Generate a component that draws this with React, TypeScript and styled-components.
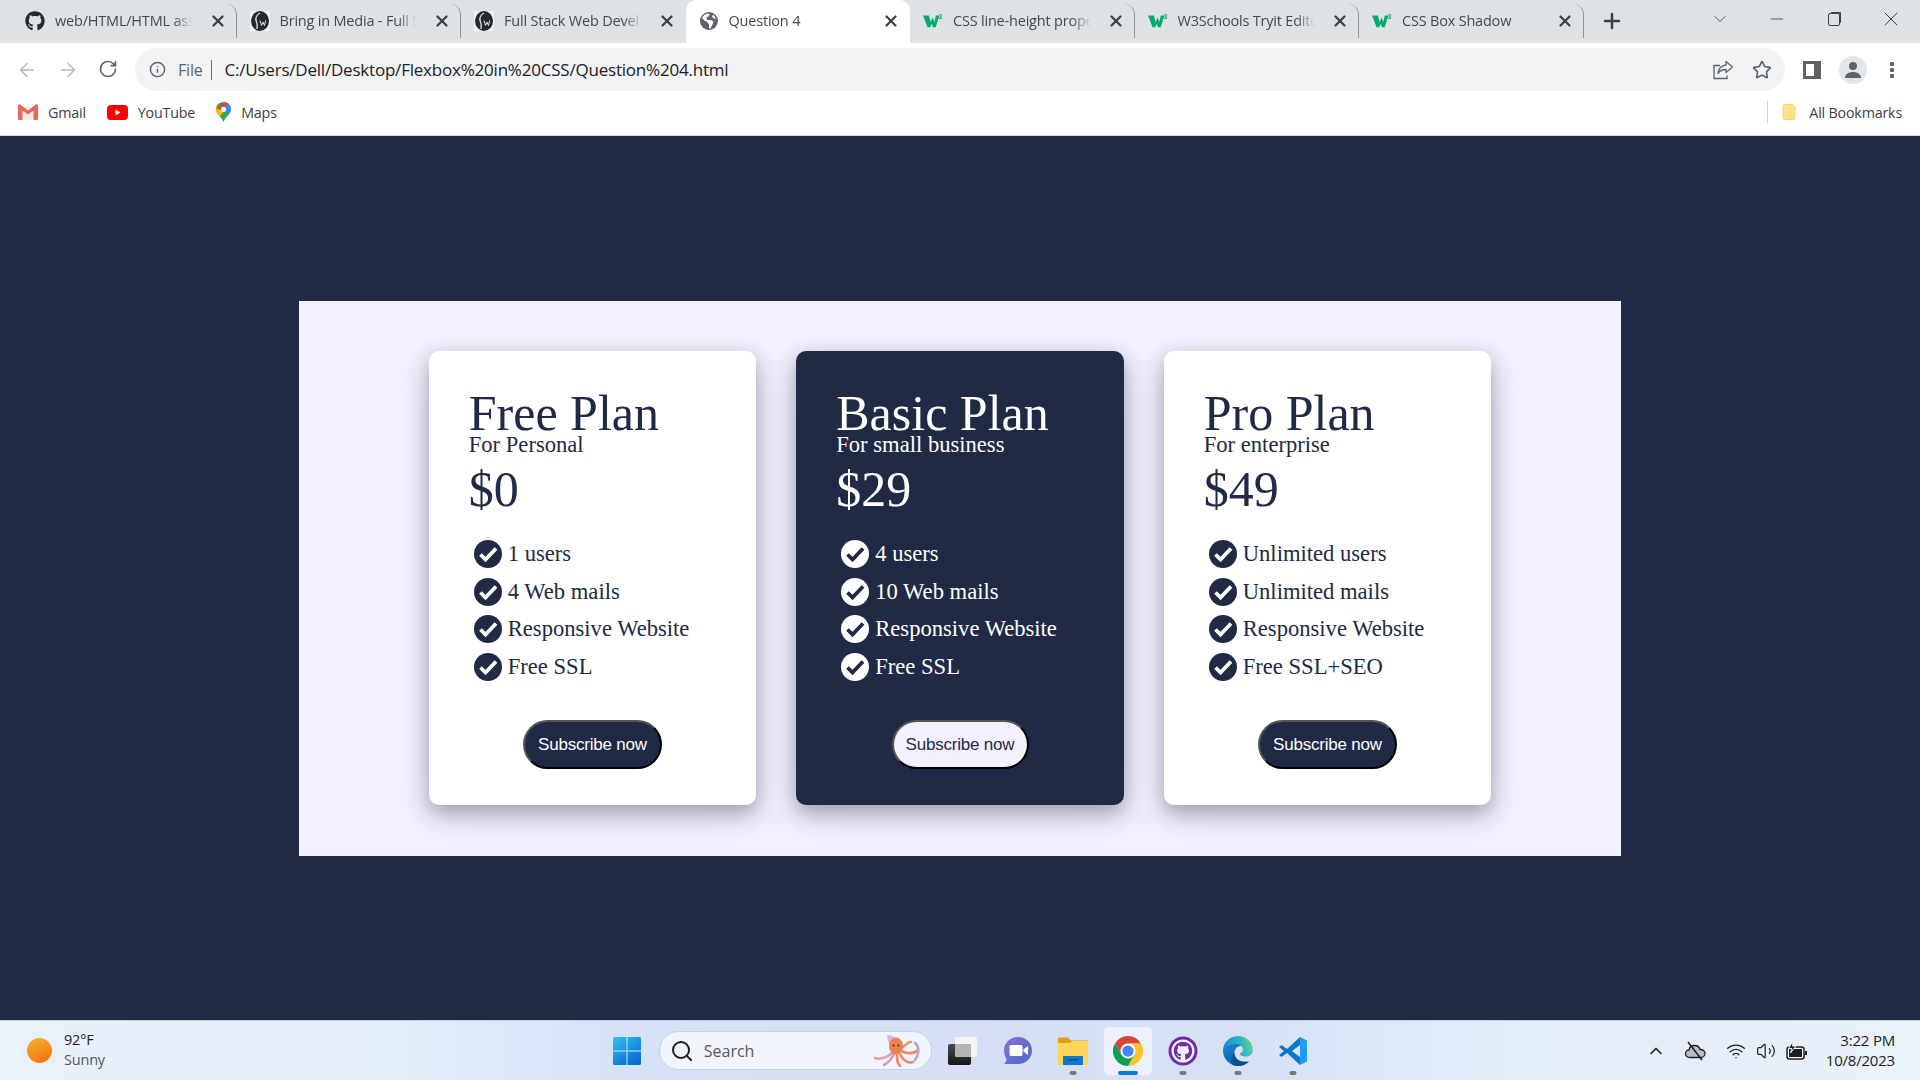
import React from "react";
import styled, { createGlobalStyle } from "styled-components";
import { FaGithub } from "react-icons/fa";
import {
  ArrowLeft,
  ArrowRight,
  RotateCw,
  Info,
  Star,
  Plus,
  X,
  ChevronDown,
  Minus,
  Search,
  ChevronUp,
  Wifi,
  Volume2,
} from "lucide-react";

const navy = "#212a45";
const lilac = "#f3f1fd";

const GlobalStyle = createGlobalStyle`
  html, body {
    margin: 0;
    padding: 0;
    height: 100%;
    overflow: hidden;
  }
  * { box-sizing: border-box; }
`;

const Screen = styled.div`
  width: 1920px;
  height: 1080px;
  display: flex;
  flex-direction: column;
  background: ${navy};
  font-family: "Open Sans", "Noto Sans", sans-serif;
`;

/* browser chrome */
const TabStrip = styled.div`
  height: 43px;
  background: #dee1e6;
  display: flex;
  align-items: flex-start;
  padding-left: 12px;
  flex: none;
`;

const TabBox = styled.div<{ $active?: boolean; $sep?: boolean }>`
  width: 224.5px;
  height: ${(p) => (p.$active ? "43px" : "34px")};
  margin-top: ${(p) => (p.$active ? "0" : "4px")};
  padding-bottom: ${(p) => (p.$active ? "1px" : "0")};
  background: ${(p) => (p.$active ? "#fff" : "transparent")};
  border-radius: 10px 10px 0 0;
  border-right: ${(p) => (p.$sep ? "1px solid #8d9094" : "1px solid transparent")};
  display: flex;
  align-items: center;
  padding-left: 13px;
  padding-right: 9px;
  gap: 10px;
  flex: none;
`;

const TabIcon = styled.span`
  width: 20px;
  height: 20px;
  display: flex;
  align-items: center;
  justify-content: center;
  flex: none;
`;

const TabTitle = styled.span`
  flex: 1;
  min-width: 0;
  margin-right: 6px;
  margin-bottom: 2px;
  font-size: 14.5px;
  letter-spacing: -0.2px;
  color: #45484d;
  white-space: nowrap;
  -webkit-mask-image: linear-gradient(to right, #000 86%, transparent 100%);
  mask-image: linear-gradient(to right, #000 86%, transparent 100%);
`;

const TabClose = styled(X)`
  flex: none;
  color: #3c3f43;
`;

const NewTab = styled(Plus)`
  margin: 9px 0 0 16px;
  color: #3c4043;
  flex: none;
`;

const WindowButtons = styled.div`
  margin-left: auto;
  margin-right: 1px;
  display: flex;
  align-items: center;
  height: 38px;
  color: #3c4043;
`;

const WindowSlot = styled.span`
  width: 57px;
  display: flex;
  justify-content: center;
`;

const RestoreIcon = styled.span`
  width: 12px;
  height: 13px;
  border: 1.2px solid #3c4043;
  border-radius: 2px;
  box-shadow: 2px -2px 0 -1px #3c4043;
`;

const Toolbar = styled.div`
  height: 48px;
  background: #fff;
  display: flex;
  align-items: center;
  padding: 5px 0 0 16px;
  flex: none;
`;

const NavButtons = styled.div`
  display: flex;
  gap: 19px;
  width: 119px;
  flex: none;
`;

const AddressBar = styled.div`
  width: 1650px;
  height: 43px;
  border-radius: 22px;
  background: #f1f3f4;
  display: flex;
  align-items: center;
  padding: 0 13px 0 14px;
  font-size: 17px;
  letter-spacing: -0.21px;
  flex: none;
`;

const FileLabel = styled.span`
  color: #5f6368;
  margin-left: 12px;
  padding-right: 9px;
  border-right: 1px solid #6c6f73;
  line-height: 20px;
  font-size: 16px;
`;

const Url = styled.span`
  color: #202124;
  margin-left: 12px;
  flex: 1;
`;

const BarRight = styled.div`
  display: flex;
  gap: 18px;
  align-items: center;
  color: #5f6368;
`;

const ToolbarRight = styled.div`
  margin-left: 18px;
  display: flex;
  align-items: center;
  gap: 18px;
  color: #5f6368;
`;

const PanelIcon = styled.span`
  width: 18px;
  height: 18px;
  border: 3px solid #5f6368;
  border-right-width: 7px;
  display: block;
`;

const Avatar = styled.span`
  width: 28px;
  height: 28px;
  border-radius: 50%;
  background: #e2e5ea;
  display: flex;
  align-items: center;
  justify-content: center;
`;

const Dots = styled.span`
  width: 4px;
  height: 16px;
  margin-left: 5px;
  background: radial-gradient(circle at 2px 2px, #5f6368 2px, transparent 2.4px) 0 0 / 4px 6px;
`;

const Bookmarks = styled.div`
  height: 45px;
  background: #fff;
  border-bottom: 1px solid #d3d5d9;
  display: flex;
  align-items: center;
  padding: 0 18px 2px;
  font-size: 14.3px;
  letter-spacing: -0.2px;
  color: #3c4043;
  flex: none;
`;

const Bookmark = styled.div`
  display: flex;
  align-items: center;
  gap: 10px;
  margin-right: 21px;
`;

const AllBookmarks = styled.div`
  margin-left: auto;
  display: flex;
  align-items: center;
  gap: 13px;
  padding-left: 14px;
  border-left: 1px solid #d5d6d8;
  height: 22px;
`;

/* page content */
const Page = styled.main`
  flex: 1;
  background: ${navy};
  display: flex;
  justify-content: center;
  padding-top: 165px;
`;

const Panel = styled.section`
  width: 1322px;
  height: 555px;
  padding-top: 50px;
  background: ${lilac};
  display: flex;
  justify-content: center;
  align-items: flex-start;
  gap: 40px;
`;

const Card = styled.article<{ $dark?: boolean }>`
  width: 327.5px;
  height: 454px;
  padding: 40px 40px 0;
  border-radius: 10px;
  background: ${(p) => (p.$dark ? navy : "#fff")};
  color: ${(p) => (p.$dark ? "#fff" : navy)};
  box-shadow: 0 8px 20px rgba(33, 42, 69, 0.35), 0 12px 40px rgba(33, 42, 69, 0.12);
  font-family: "Liberation Serif", "Times New Roman", serif;
  display: flex;
  flex-direction: column;
`;

const PlanName = styled.h2`
  margin: 0;
  font-size: 50px;
  line-height: 44px;
  font-weight: 400;
`;

const Audience = styled.div`
  font-size: 22.6px;
  line-height: 20px;
`;

const Price = styled.div`
  font-size: 50px;
  line-height: 55px;
  margin-top: 7px;
`;

const Features = styled.ul`
  list-style: none;
  margin: 23px 0 0;
  padding: 0 0 0 5px;
  display: flex;
  flex-direction: column;
  gap: 9.7px;
`;

const Feature = styled.li`
  height: 28px;
  display: flex;
  align-items: center;
  gap: 6px;
  font-size: 22.6px;
  white-space: nowrap;
`;

const Subscribe = styled.button<{ $dark?: boolean }>`
  align-self: center;
  width: ${(p) => (p.$dark ? "137px" : "139px")};
  height: 49px;
  margin-top: 39px;
  border-radius: 25px;
  border: 2px outset #111;
  border-color: #555 #000 #000 #555;
  background: ${(p) => (p.$dark ? lilac : navy)};
  color: ${(p) => (p.$dark ? navy : "#fff")};
  font-family: "Liberation Sans", Arial, sans-serif;
  font-size: 17px;
  letter-spacing: -0.2px;
  padding: 0;
`;

/* taskbar */
const Taskbar = styled.footer`
  height: 60px;
  flex: none;
  border-top: 1px solid #c5ccda;
  background: linear-gradient(90deg, #e9f1f9 0%, #e4eef9 20%, #d5e2f8 32%, #d5def5 50%, #d7e1f6 65%, #e4eef9 80%, #e9f1f9 100%);
  display: grid;
  grid-template-columns: 1fr auto 1fr;
  align-items: center;
`;

const Weather = styled.div`
  display: flex;
  align-items: center;
  gap: 12px;
  padding-left: 27px;
`;

const Sun = styled.span`
  width: 25px;
  height: 25px;
  border-radius: 50%;
  background: linear-gradient(160deg, #f2b32a, #f56f10);
`;

const WeatherText = styled.div`
  font-size: 14.5px;
  line-height: 20px;
  letter-spacing: -0.2px;
  color: #1d1f24;
  padding-bottom: 2px;
`;

const Muted = styled.div`
  color: #55585f;
`;

const Center = styled.div`
  display: flex;
  align-items: center;
  margin-left: 12px;
`;

const SearchBox = styled.div`
  width: 273px;
  height: 39px;
  margin-left: 17px;
  margin-right: 3.5px;
  border-radius: 20px;
  background: #f1f5fd;
  border: 1px solid #c7cfe3;
  display: flex;
  align-items: center;
  padding: 0 10px 0 10px;
  gap: 10px;
  font-size: 16px;
  color: #55585f;
`;

const SearchText = styled.span`
  flex: 1;
`;

const AppSlot = styled.div<{ $active?: boolean }>`
  width: 48px;
  height: 48px;
  margin: 0 3.5px;
  border-radius: 5px;
  background: ${(p) => (p.$active ? "rgba(255,255,255,.55)" : "transparent")};
  display: flex;
  align-items: center;
  justify-content: center;
  position: relative;
`;

const RunDot = styled.span<{ $active?: boolean }>`
  position: absolute;
  bottom: 0;
  left: 50%;
  transform: translateX(-50%);
  width: ${(p) => (p.$active ? "20px" : "7px")};
  height: 4px;
  border-radius: 2px;
  background: ${(p) => (p.$active ? "#0b78d8" : "#75777c")};
`;

const Tray = styled.div`
  justify-self: end;
  display: flex;
  align-items: center;
  color: #1d1f24;
  padding-right: 25px;
`;

const TrayIcons = styled.div`
  display: flex;
  align-items: center;
  gap: 10px;
  margin-right: 18px;
`;

const TraySlot = styled.span<{ $extra?: number }>`
  display: flex;
  margin-right: ${(p) => p.$extra ?? 0}px;
`;

const Clock = styled.div`
  text-align: right;
  font-size: 15px;
  line-height: 20px;
  letter-spacing: -0.2px;
  color: #1d1f24;
  padding-bottom: 2px;
`;

const W3Logo = () => (
  <svg width="22" height="16" viewBox="0 0 22 16">
    <path fill="#04aa6d" d="M0 2h6.500l2 7 2-5 2 5 1.600-7H18l-4 13h-3L9.500 11 8 15H5z" />
    <text x="17" y="6" fontSize="7" fontFamily="Liberation Sans, sans-serif" fontWeight="700" fill="#04aa6d">3</text>
  </svg>
);

const WpIcon = () => (
  <svg width="20" height="20" viewBox="0 0 20 20">
    <rect width="20" height="20" fill="#f1f1f1" />
    <ellipse cx="10" cy="10" rx="9" ry="10" fill="#23292e" />
    <path d="M10 2C6 4 5 8 6.500 11c1 2 1 4 .5 7" fill="none" stroke="#e8e8e8" strokeWidth="1.300" />
    <path d="M10 9.500l1.500 5 1.500-3.500 1.500 3.500 1.200-5" fill="none" stroke="#e8e8e8" strokeWidth="1" />
  </svg>
);

const Globe = () => (
  <svg width="18" height="18" viewBox="0 0 18 18">
    <circle cx="9" cy="9" r="9" fill="#5f6368" />
    <path fill="#fff" d="M7.500 1.500C5 2 3 4 2 6l3 3 2 .5 1 2 1 .5v4l1.500.5 2-4 1-3-3-1.500H7L6.500 5.500 9 4l.5-2zM13 2.500l-1 2.500 3.500 2.500c0-2-1-4-2.500-5z" />
  </svg>
);

const ShareIcon = () => (
  <svg width="22" height="20" viewBox="0 0 22 20" fill="none" stroke="#5f6368" strokeWidth="1.300">
    <path d="M8 5.500H2v13h13v-3" />
    <path d="M14 1.500l6.500 5.500-6.500 5.500V9.500c-3.500 0-6 1-8 4 .5-4.500 3.500-8 8-8.500z" strokeLinejoin="round" />
  </svg>
);

const GmailIcon = () => (
  <svg width="20" height="16" viewBox="0 0 20 16">
    <path fill="#eeeeee" d="M3 3h14v13H3z" />
    <path fill="#e8685c" d="M0 1.500 1.500 0 10 6.500 18.500 0 20 1.500V14.500A1.500 1.500 0 0 1 18.500 16H15.500V6.500L10 10.500 4.500 6.500V16H1.500A1.500 1.500 0 0 1 0 14.500z" />
  </svg>
);

const YoutubeIcon = () => (
  <svg width="21" height="15" viewBox="0 0 21 15">
    <rect width="21" height="15" rx="4" fill="#f00" />
    <path fill="#fff" d="M8.500 4.500v6l5-3z" />
  </svg>
);

const MapsIcon = () => (
  <svg width="15" height="20" viewBox="0 0 15 20">
    <defs>
      <clipPath id="pin">
        <path d="M7.500 0C3.400 0 0 3.200 0 7.300 0 12 5 14.500 7.500 20 10 14.500 15 12 15 7.300 15 3.200 11.600 0 7.500 0z" />
      </clipPath>
    </defs>
    <g clipPath="url(#pin)">
      <rect width="15" height="20" fill="#34a853" />
      <path fill="#fbbc04" d="M0 5h5l2 6-5 5H0z" />
      <path fill="#4285f4" d="M9 0h6v11l-7-1z" />
      <path fill="#ea4335" d="M0 6 9 0l3 2-8 6z" />
    </g>
    <circle cx="7.500" cy="7.300" r="2.600" fill="#fff" />
  </svg>
);

const FolderIcon = () => (
  <svg width="14" height="16" viewBox="0 0 14 16">
    <path fill="#fde38a" stroke="#f6d45f" d="M1 2a1.500 1.500 0 0 1 1.500-1.500h8L13 3v11a1.500 1.500 0 0 1-1.500 1.500h-9A1.500 1.500 0 0 1 1 14z" />
  </svg>
);

const CheckBadge = ({ dark }: { dark?: boolean }) => (
  <svg width="28" height="28" viewBox="0 0 28 28">
    <circle cx="14" cy="14" r="14" fill={dark ? "#fff" : navy} />
    <path d="M6.500 14.500 11.500 19.500 22 8.500" fill="none" stroke={dark ? navy : "#fff"} strokeWidth="3.800" />
  </svg>
);

const WindowsIcon = () => (
  <svg width="30" height="30" viewBox="0 0 30 30">
    <defs>
      <linearGradient id="win" x1="0" y1="0" x2="0.6" y2="1">
        <stop offset="0" stopColor="#35c1f7" />
        <stop offset="1" stopColor="#0570d0" />
      </linearGradient>
    </defs>
    <path fill="url(#win)" d="M1 2.500A1.500 1.500 0 0 1 2.500 1h12v13.500H1zM15.500 1h12A1.500 1.500 0 0 1 29 2.500v12H15.500zM1 15.500h13.500V29h-12A1.500 1.500 0 0 1 1 27.500zM15.500 15.500H29v12a1.500 1.500 0 0 1-1.500 1.500h-12z" />
  </svg>
);

const Octopus = () => (
  <svg width="48" height="32" viewBox="0 0 48 32">
    <path fill="#d9b8e0" d="M14 0c6 0 11 3 12 8l-7 5c-3-3-5-8-5-13z" />
    <g fill="none" strokeWidth="2.600" strokeLinecap="round">
      <path d="M20 17C15 22 8 25 2 23" stroke="#e9a0a0" />
      <path d="M21 19C18 25 15 28 11 30" stroke="#d99ac0" />
      <path d="M24 20C24 25 24 28 27 31" stroke="#ef8a6a" />
      <path d="M27 19C30 25 34 29 40 27" stroke="#ef8a6a" />
      <path d="M28 16C34 19 41 19 45 15" stroke="#ef8a6a" />
      <path d="M28 13C33 12 34 6 38 7" stroke="#f09a70" />
      <path d="M42 8C47 12 46 20 42 25" stroke="#b5a4d8" />
    </g>
    <ellipse cx="23" cy="11" rx="7" ry="8.500" fill="#f0804f" />
    <circle cx="20.500" cy="10.500" r="1" fill="#333" />
    <circle cx="25.500" cy="10.500" r="1" fill="#333" />
  </svg>
);

const TaskViewIcon = () => (
  <svg width="30" height="28" viewBox="0 0 30 28">
    <defs>
      <linearGradient id="tv" x1="0" y1="0" x2="0" y2="1">
        <stop offset="0" stopColor="#4a4a4c" />
        <stop offset="1" stopColor="#161616" />
      </linearGradient>
    </defs>
    <rect x="0" y="7" width="23" height="21" rx="2" fill="url(#tv)" />
    <rect x="7" y="0" width="22" height="20" rx="2" fill="#f4f4f6" />
    <path d="M7 7h16v13H9a2 2 0 0 1-2-2z" fill="#b4b4b6" />
  </svg>
);

const ChatIcon = () => (
  <svg width="30" height="30" viewBox="0 0 30 30">
    <defs>
      <linearGradient id="chat" x1="0" y1="0" x2="1" y2="1">
        <stop offset="0" stopColor="#8a6fd4" />
        <stop offset="1" stopColor="#4a6cc8" />
      </linearGradient>
    </defs>
    <path fill="url(#chat)" d="M15 1c8 0 14 6 14 13.500S23 28 15 28H1c1.500-1.500 2.500-3 2.500-5C2 20.500 1 17.500 1 14.500 1 7 7 1 15 1z" />
    <path fill="#fff" d="M8 9h10a1.500 1.500 0 0 1 1.500 1.500v8A1.500 1.500 0 0 1 18 20H8a1.500 1.500 0 0 1-1.500-1.500v-8A1.500 1.500 0 0 1 8 9zM20.500 13.500 25 10v9l-4.500-3.500z" />
  </svg>
);

const ExplorerIcon = () => (
  <svg width="30" height="28" viewBox="0 0 30 28">
    <path fill="#e0a10e" d="M0 2a1.500 1.500 0 0 1 1.500-1.500H10l3 3h17V9H0z" />
    <path fill="#ffd65a" d="M0 6h12l2-2h16v24H0z" />
    <path fill="#0e78d0" d="M6 19h18a1 1 0 0 1 1 1v8H5v-8a1 1 0 0 1 1-1z" />
    <rect x="10" y="22" width="10" height="1.500" fill="#0a4f90" />
  </svg>
);

const ChromeIcon = () => (
  <svg width="30" height="30" viewBox="0 0 48 48">
    <path fill="#db4437" d="M24 0A24 24 0 0 1 44.800 12L24 12A12 12 0 0 0 13.600 30L3.200 12A24 24 0 0 1 24 0z" />
    <path fill="#fbc02d" d="M44.800 12A24 24 0 0 1 24 48L34.400 30A12 12 0 0 0 24 12z" />
    <path fill="#0f9d58" d="M3.200 12A24 24 0 0 0 24 48L34.400 30A12 12 0 0 1 13.600 30z" />
    <circle cx="24" cy="24" r="11.500" fill="#fff" />
    <circle cx="24" cy="24" r="9" fill="#4285f4" />
  </svg>
);

const GithubDesktopIcon = () => (
  <svg width="30" height="30" viewBox="0 0 30 30">
    <circle cx="15" cy="15" r="14.500" fill="#6b2f9e" />
    <circle cx="15" cy="15" r="11.500" fill="#f4eefa" />
    <FaGithub x="5.500" y="5.500" size={19} color="#6b2f9e" />
  </svg>
);

const EdgeIcon = () => (
  <svg width="30" height="30" viewBox="0 0 30 30">
    <defs>
      <linearGradient id="edgeTop" x1="0" y1="0.6" x2="1" y2="0.4">
        <stop offset="0" stopColor="#1b86d6" />
        <stop offset="0.6" stopColor="#2bb6c4" />
        <stop offset="1" stopColor="#6bd68a" />
      </linearGradient>
      <linearGradient id="edgeBody" x1="0" y1="0" x2="0.6" y2="1">
        <stop offset="0" stopColor="#1a8fdc" />
        <stop offset="1" stopColor="#0c5aa6" />
      </linearGradient>
    </defs>
    <path fill="url(#edgeBody)" d="M0 15C0 7 6 1 14 1l4 9c-4 0-7 3.500-6.500 8 .5 5 5 9 14.500 7.500-3 3-7 4.500-11 4.500C7 30 0 23 0 15z" />
    <path fill="url(#edgeTop)" d="M1 10C3 4 9 0 15 0c9 0 15 7 15 14 0 4-3 6.500-7 6.500-3 0-6-1-6-2.500 0-1 3-1.500 3-4.500 0-3-3-5.500-7-5.500C8 8.500 3 10 1 14z" />
    <path fill="#0a4a8e" d="M11.500 17c.5 5.500 5 10 14.500 8.500-3 3-7 4.500-11 4.500-2 0-4-.5-5.500-1.200C7 25 8 19.500 11.500 17z" opacity=".75" />
  </svg>
);

const VscodeIcon = () => (
  <svg width="30" height="30" viewBox="0 0 30 30">
    <path fill="#0a78c8" d="M1 11l2.500-2L9 13 22 1v8l-8 6 8 6v8L9 17l-5.500 4L1 19l5-4z" />
    <path fill="#1f9cf0" d="M22 1l7 3.500v21L22 29z" />
  </svg>
);

const CloudOffIcon = () => (
  <svg width="22" height="20" viewBox="0 0 22 20">
    <path fill="#b9bcc0" stroke="#1d1f24" strokeWidth="1.300" d="M6 16.500c-3 0-4.500-1.800-4.500-3.800S3 9 5 9c.5-3 3-4.500 5.500-4.500 3 0 5 2 5.500 4 3-.2 5 1.500 5 4 0 2.300-2 4-4.500 4z" />
    <path stroke="#1d1f24" strokeWidth="1.500" d="M4 1l14 18" />
  </svg>
);

const BatteryIcon = () => (
  <svg width="22" height="20" viewBox="0 0 22 20">
    <rect x="1" y="6" width="17" height="12" rx="2.500" fill="#fff" stroke="#1d1f24" strokeWidth="1.500" />
    <rect x="3" y="8" width="13" height="8" fill="#1d1f24" />
    <path fill="#1d1f24" d="M19 10h2v4h-2z" />
    <path fill="#1d1f24" stroke="#e9f1f9" strokeWidth="1" d="M7 0 2.500 7.500H6L4.500 12 10 5H6.500z" />
  </svg>
);

const tabs = [
  { title: "web/HTML/HTML ass", icon: <FaGithub size={20} color="#24292e" /> },
  { title: "Bring in Media - Full S", icon: <WpIcon /> },
  { title: "Full Stack Web Devel", icon: <WpIcon /> },
  { title: "Question 4", icon: <Globe />, active: true },
  { title: "CSS line-height prope", icon: <W3Logo /> },
  { title: "W3Schools Tryit Edito", icon: <W3Logo /> },
  { title: "CSS Box Shadow", icon: <W3Logo /> },
];

const plans = [
  {
    name: "Free Plan",
    audience: "For Personal",
    price: "$0",
    features: ["1 users", "4 Web mails", "Responsive Website", "Free SSL"],
  },
  {
    name: "Basic Plan",
    audience: "For small business",
    price: "$29",
    features: ["4 users", "10 Web mails", "Responsive Website", "Free SSL"],
    dark: true,
  },
  {
    name: "Pro Plan",
    audience: "For enterprise",
    price: "$49",
    features: ["Unlimited users", "Unlimited mails", "Responsive Website", "Free SSL+SEO"],
  },
];

const apps = [
  { icon: <TaskViewIcon /> },
  { icon: <ChatIcon /> },
  { icon: <ExplorerIcon />, dot: true },
  { icon: <ChromeIcon />, dot: true, active: true },
  { icon: <GithubDesktopIcon />, dot: true },
  { icon: <EdgeIcon />, dot: true },
  { icon: <VscodeIcon />, dot: true },
];

export default function App() {
  return (
    <Screen>
      <GlobalStyle />
      <TabStrip>
        {tabs.map((tab, i) => (
          <TabBox key={tab.title} $active={tab.active} $sep={!tab.active && i !== 2}>
            <TabIcon>{tab.icon}</TabIcon>
            <TabTitle>{tab.title}</TabTitle>
            <TabClose size={18} strokeWidth={3} />
          </TabBox>
        ))}
        <NewTab size={24} strokeWidth={2.5} />
        <WindowButtons>
          <WindowSlot>
            <ChevronDown size={20} strokeWidth={1} />
          </WindowSlot>
          <WindowSlot>
            <Minus size={20} strokeWidth={1} />
          </WindowSlot>
          <WindowSlot>
            <RestoreIcon />
          </WindowSlot>
          <WindowSlot>
            <X size={24} strokeWidth={1} />
          </WindowSlot>
        </WindowButtons>
      </TabStrip>

      <Toolbar>
        <NavButtons>
          <ArrowLeft size={22} color="#b5b7ba" strokeWidth={1.6} />
          <ArrowRight size={22} color="#b5b7ba" strokeWidth={1.6} />
          <RotateCw size={20} color="#5f6368" strokeWidth={2} />
        </NavButtons>
        <AddressBar>
          <Info size={17} color="#5f6368" strokeWidth={2} />
          <FileLabel>File</FileLabel>
          <Url>C:/Users/Dell/Desktop/Flexbox%20in%20CSS/Question%204.html</Url>
          <BarRight>
            <ShareIcon />
            <Star size={20} strokeWidth={2} />
          </BarRight>
        </AddressBar>
        <ToolbarRight>
          <PanelIcon />
          <Avatar>
            <svg width="18" height="18" viewBox="0 0 18 18">
              <circle cx="9" cy="5" r="4" fill="#5f6368" />
              <path fill="#5f6368" d="M1 17c0-4 4-6 8-6s8 2 8 6z" />
            </svg>
          </Avatar>
          <Dots />
        </ToolbarRight>
      </Toolbar>

      <Bookmarks>
        <Bookmark>
          <GmailIcon />
          Gmail
        </Bookmark>
        <Bookmark>
          <YoutubeIcon />
          YouTube
        </Bookmark>
        <Bookmark>
          <MapsIcon />
          Maps
        </Bookmark>
        <AllBookmarks>
          <FolderIcon />
          All Bookmarks
        </AllBookmarks>
      </Bookmarks>

      <Page>
        <Panel>
          {plans.map((plan) => (
            <Card key={plan.name} $dark={plan.dark}>
              <PlanName>{plan.name}</PlanName>
              <Audience>{plan.audience}</Audience>
              <Price>{plan.price}</Price>
              <Features>
                {plan.features.map((f) => (
                  <Feature key={f}>
                    <CheckBadge dark={plan.dark} />
                    {f}
                  </Feature>
                ))}
              </Features>
              <Subscribe $dark={plan.dark}>Subscribe now</Subscribe>
            </Card>
          ))}
        </Panel>
      </Page>

      <Taskbar>
        <Weather>
          <Sun />
          <WeatherText>
            92°F
            <Muted>Sunny</Muted>
          </WeatherText>
        </Weather>
        <Center>
          <WindowsIcon />
          <SearchBox>
            <Search size={24} color="#1d1f24" strokeWidth={2} />
            <SearchText>Search</SearchText>
            <Octopus />
          </SearchBox>
          {apps.map((app, i) => (
            <AppSlot key={i} $active={app.active}>
              {app.icon}
              {app.dot && <RunDot $active={app.active} />}
            </AppSlot>
          ))}
        </Center>
        <Tray>
          <TrayIcons>
            <TraySlot $extra={8}>
              <ChevronUp size={20} strokeWidth={2} />
            </TraySlot>
            <TraySlot $extra={10}>
              <CloudOffIcon />
            </TraySlot>
            <TraySlot>
              <Wifi size={20} strokeWidth={1.6} />
            </TraySlot>
            <TraySlot>
              <Volume2 size={20} strokeWidth={1.4} />
            </TraySlot>
            <TraySlot>
              <BatteryIcon />
            </TraySlot>
          </TrayIcons>
          <Clock>
            3:22 PM
            <div>10/8/2023</div>
          </Clock>
        </Tray>
      </Taskbar>
    </Screen>
  );
}
